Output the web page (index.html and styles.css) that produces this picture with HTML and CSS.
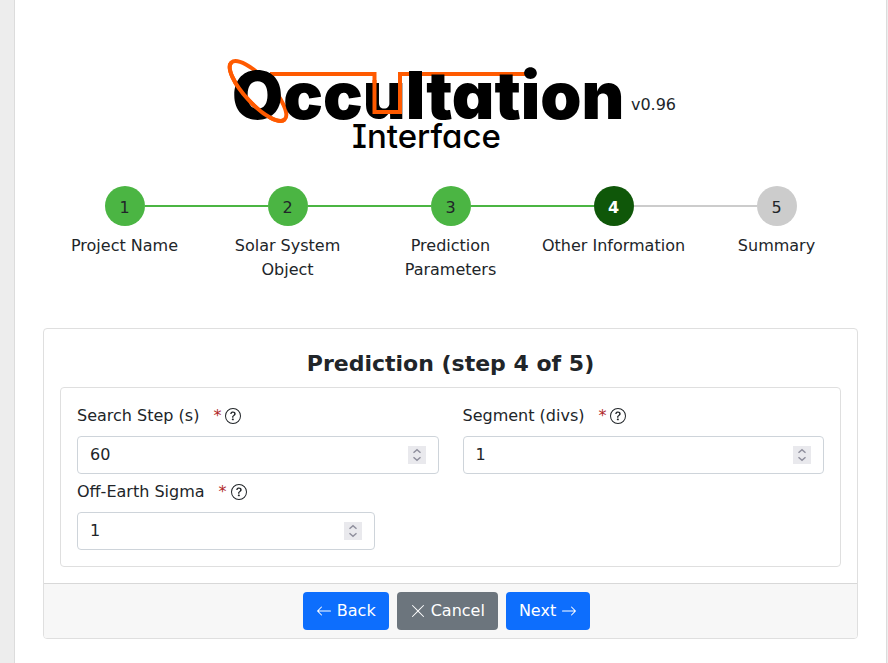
FILE: index.html
```html
<!DOCTYPE html>
<html lang="en">
<head>
<meta charset="utf-8">
<meta name="viewport" content="width=device-width, initial-scale=1">
<title>Occultation Interface</title>
<link rel="stylesheet" href="styles.css">
</head>
<body>
<svg class="sprite" aria-hidden="true">
  <symbol id="help" viewBox="0 0 16 16"><path d="M8 15A7 7 0 1 1 8 1a7 7 0 0 1 0 14m0 1A8 8 0 1 0 8 0a8 8 0 0 0 0 16"/><path d="M5.255 5.786a.237.237 0 0 0 .241.247h.825c.138 0 .248-.113.266-.25.09-.656.54-1.134 1.342-1.134.686 0 1.314.343 1.314 1.168 0 .635-.374.927-.965 1.371-.673.489-1.206 1.06-1.168 1.987l.003.217a.25.25 0 0 0 .25.246h.811a.25.25 0 0 0 .25-.25v-.105c0-.718.273-.927 1.01-1.486.609-.463 1.244-.977 1.244-2.056 0-1.511-1.276-2.241-2.673-2.241-1.267 0-2.655.59-2.75 2.286m1.557 5.763c0 .533.425.927 1.01.927.609 0 1.028-.394 1.028-.927 0-.552-.42-.94-1.029-.94-.584 0-1.009.388-1.009.94"/></symbol>
  <symbol id="spin" viewBox="0 0 18 18"><rect width="18" height="18" fill="#e9e9ed"/><path d="M5.500 6.800 9 3.800l3.500 3M5.500 11.200l3.500 3 3.500-3" fill="none" stroke="#8f8f9d" stroke-width="1.500"/></symbol>
</svg>
<main class="page">
  <header class="brand">
    <svg class="logo" viewBox="225 55 400 100" role="img" aria-label="Occultation Interface">
      <ellipse class="orbit" cx="258" cy="91" rx="39" ry="13" transform="rotate(47 258 91)"/>
      <path class="orbit" d="M270 74H374.500V112H400V74H527"/>
      <text class="word" x="232" y="119">Occultation</text>
      <path class="orbit" d="M374.500 80V112H400V80"/>
      <path class="orbit" d="M219 91a39 13 0 0 0 78 0" transform="rotate(47 258 91)"/>
      <text class="subword" x="352" y="148">Interface</text>
    </svg>
    <span>v0.96</span>
  </header>

  <ol class="steps">
    <li class="step done"><span class="track"><span class="dot">1</span></span><span class="name">Project Name</span></li>
    <li class="step done"><span class="track"><span class="dot">2</span></span><span class="name">Solar System Object</span></li>
    <li class="step done"><span class="track"><span class="dot">3</span></span><span class="name">Prediction Parameters</span></li>
    <li class="step current" aria-current="step"><span class="track"><span class="dot">4</span></span><span class="name">Other Information</span></li>
    <li class="step"><span class="track"><span class="dot">5</span></span><span class="name">Summary</span></li>
  </ol>

  <form class="card">
    <div class="card-body">
      <h1>Prediction (step 4 of 5)</h1>
      <div class="fields">
        <div class="field">
          <label for="search-step">Search Step (s) <span class="required">*</span><svg class="icon"><use href="#help"/></svg></label>
          <div class="number"><input id="search-step" type="number" value="60"><svg class="spin"><use href="#spin"/></svg></div>
        </div>
        <div class="field">
          <label for="segment">Segment (divs) <span class="required">*</span><svg class="icon"><use href="#help"/></svg></label>
          <div class="number"><input id="segment" type="number" value="1"><svg class="spin"><use href="#spin"/></svg></div>
        </div>
        <div class="field sigma">
          <label for="sigma">Off-Earth Sigma <span class="required">*</span><svg class="icon"><use href="#help"/></svg></label>
          <div class="number"><input id="sigma" type="number" value="1"><svg class="spin"><use href="#spin"/></svg></div>
        </div>
      </div>
    </div>
    <footer class="actions">
      <button class="btn" type="button"><svg class="icon" viewBox="0 0 16 16"><path fill-rule="evenodd" d="M15 8a.5.5 0 0 0-.5-.5H2.707l3.147-3.146a.5.5 0 1 0-.708-.708l-4 4a.5.5 0 0 0 0 .708l4 4a.5.5 0 0 0 .708-.708L2.707 8.500H14.500A.5.5 0 0 0 15 8"/></svg>Back</button>
      <button class="btn secondary" type="button"><svg class="icon" viewBox="0 0 16 16"><path d="M2.146 2.854a.5.5 0 1 1 .708-.708L8 7.293l5.146-5.147a.5.5 0 0 1 .708.708L8.707 8l5.147 5.146a.5.5 0 0 1-.708.708L8 8.707l-5.146 5.147a.5.5 0 0 1-.708-.708L7.293 8z"/></svg>Cancel</button>
      <button class="btn" type="submit">Next<svg class="icon" viewBox="0 0 16 16"><path fill-rule="evenodd" d="M1 8a.5.5 0 0 1 .5-.5h11.793l-3.147-3.146a.5.5 0 0 1 .708-.708l4 4a.5.5 0 0 1 0 .708l-4 4a.5.5 0 0 1-.708-.708L13.293 8.500H1.500A.5.5 0 0 1 1 8"/></svg></button>
    </footer>
  </form>
</main>
</body>
</html>
```
FILE: styles.css
```css
* { box-sizing: border-box; }

body {
  margin: 0;
  background: #ededed;
  color: #212529;
  font: 16px/24px Verdana, "DejaVu Sans", sans-serif;
}

.sprite { display: none; }

.page {
  min-height: 100vh;
  margin: 0 1px 0 14px;
  padding: 55px 28px 24px;
  border: solid #dcdcdc;
  border-width: 0 1px;
  background: #fff;
}

.brand {
  display: flex;
  align-items: center;
  justify-content: center;
  gap: 6px;
}

.logo { width: 400px; height: 100px; }
.orbit { fill: none; stroke: #ff5a00; stroke-width: 4; }
.word {
  fill: #000;
  font: 900 66px Inter, sans-serif;
  font-feature-settings: "cv11";
}
.subword {
  fill: #000;
  font: 500 33px Inter, sans-serif;
  font-feature-settings: "cv08", "cv11";
}

.steps {
  display: grid;
  grid-template-columns: repeat(5, 1fr);
  margin: 31px 0 46px;
  padding: 0;
  list-style: none;
  text-align: center;
}

.step { --before: #4bb543; --after: #4bb543; --dot: #ccc; }
.step.done { --dot: #4bb543; }
.step:first-child { --before: transparent; }
.step.current { --dot: #0f5709; --after: #ccc; }
.step:last-child { --before: #ccc; --after: transparent; }

.track {
  display: flex;
  align-items: center;
  margin-bottom: 8px;
}
.track::before, .track::after {
  content: "";
  flex: 1;
  height: 2px;
  background: var(--before);
}
.track::after { background: var(--after); }

.dot {
  width: 40px;
  height: 40px;
  border-radius: 50%;
  background: var(--dot);
  line-height: 43px;
}
.current .dot { color: #fff; font-weight: 700; }

.name { display: block; padding: 0 4px; }

.card {
  border: 1px solid #dfdfdf;
  border-radius: 4px;
  overflow: hidden;
}

.card-body { padding: 16px; }

h1 {
  margin: 5px 0 9px;
  font-size: 22px;
  line-height: 28px;
  text-align: center;
}

.fields {
  display: grid;
  grid-template-columns: 1fr 1fr;
  gap: 6px 24px;
  padding: 16px;
  border: 1px solid #dfdfdf;
  border-radius: 4px;
}

.field label {
  display: flex;
  align-items: center;
  margin-bottom: 8px;
}
.sigma { margin-right: 64px; }

.required { margin: 0 4px 0 14px; color: #b02a2a; }

.icon { width: 16px; height: 16px; fill: currentColor; }

.number {
  display: flex;
  align-items: center;
  height: 38px;
  padding: 0 12px;
  border: 1px solid #ced4da;
  border-radius: 4px;
}
.number input {
  flex: 1;
  min-width: 0;
  padding: 0;
  border: 0;
  outline: 0;
  background: none;
  color: inherit;
  font: inherit;
  appearance: textfield;
}
.number input::-webkit-inner-spin-button { appearance: none; margin: 0; }
.spin { width: 18px; height: 18px; }

.actions {
  display: flex;
  justify-content: center;
  padding: 8px;
  border-top: 1px solid #d8d8d8;
  background: #f7f7f7;
}

.btn {
  display: flex;
  align-items: center;
  gap: 5px;
  height: 38px;
  margin-right: 8px;
  padding: 0 13px;
  border: 0;
  border-radius: 4px;
  background: #0d6efd;
  color: #fff;
  font: inherit;
}
.btn.secondary { background: #6c757d; }
```
